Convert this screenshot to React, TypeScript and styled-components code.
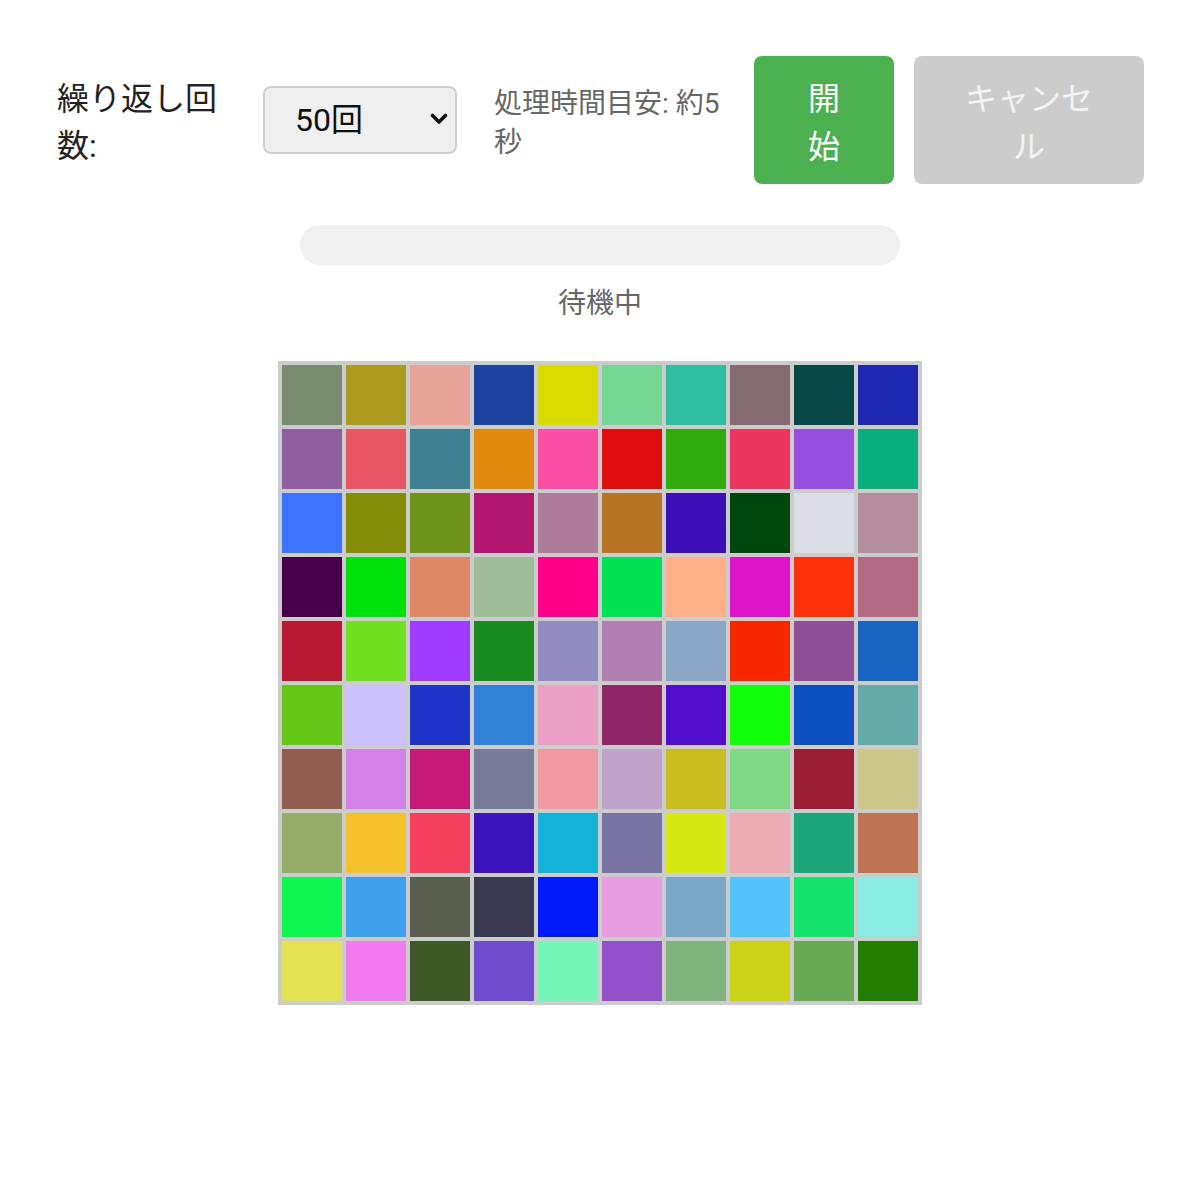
import React, { useState } from "react";
import styled, { createGlobalStyle } from "styled-components";

const GlobalStyle = createGlobalStyle`
  html, body { margin: 0; padding: 0; background: #ffffff; }
  body { font-family: Roboto, "Noto Sans CJK JP", sans-serif; color: #222; }
`;

const Page = styled.div`
  display: flex;
  flex-direction: column;
  align-items: center;
  padding: 56px 0 40px;
`;

const Controls = styled.div`
  align-self: stretch;
  display: flex;
  align-items: center;
  gap: 20px;
  margin: 0 56px 0 57px;
`;

const Label = styled.label`
  flex: none;
  width: 186px;
  padding-top: 6px;
  font-size: 32px;
  line-height: 47px;
  color: #222;
`;

const SelectWrap = styled.div`
  position: relative;
  flex: none;
  width: 194px;
  height: 68px;
`;

const Select = styled.select`
  appearance: none;
  -webkit-appearance: none;
  width: 100%;
  height: 100%;
  box-sizing: border-box;
  border: 2px solid #cfcfcf;
  border-radius: 8px;
  background: #efefef;
  padding: 0 40px 0 30px;
  font-family: Roboto, "Noto Sans CJK JP", sans-serif;
  font-size: 32px;
  color: #111;
`;

const Chevron = styled.svg`
  position: absolute;
  right: 9px;
  top: 27px;
  width: 18px;
  height: 12px;
  pointer-events: none;
`;

const Hint = styled.div`
  flex: none;
  width: 240px;
  margin-left: 17px;
  padding-top: 6px;
  font-size: 28px;
  line-height: 39px;
  color: #666;
`;

const Button = styled.button<{ $variant: "start" | "cancel"; $w: number }>`
  flex: none;
  width: ${(p) => p.$w}px;
  box-sizing: border-box;
  padding: 19px 40px 13px;
  border: none;
  border-radius: 8px;
  font-family: Roboto, "Noto Sans CJK JP", sans-serif;
  font-size: 32px;
  line-height: 48px;
  text-align: center;
  background: ${(p) => (p.$variant === "start" ? "#4caf50" : "#cccccc")};
  color: ${(p) => (p.$variant === "start" ? "#ffffff" : "#f3f3f3")};
  cursor: pointer;
`;

const Track = styled.div`
  margin-top: 41px;
  width: 600px;
  height: 40px;
  border-radius: 20px;
  background: #f0f0f0;
`;

const Status = styled.div`
  margin-top: 17px;
  font-size: 28px;
  line-height: 39px;
  color: #666;
  font-family: "Noto Sans CJK JP", sans-serif;
`;

const Grid = styled.div`
  margin-top: 40px;
  display: grid;
  grid-template-columns: repeat(10, 60px);
  grid-auto-rows: 60px;
  gap: 4px;
  padding: 4px;
  background: #cccccc;
`;

const Cell = styled.div<{ $c: string }>`
  background: ${(p) => p.$c};
`;

const colors: string[] = [
  "#778b6f", "#aa9a1f", "#e8a49a", "#1a44a0", "#d8dc00", "#76d696", "#2ebd9f", "#856a72", "#0a4747", "#1e28b0",
  "#8e5fa0", "#e85565", "#3f8090", "#e0880f", "#fb4fa6", "#e00f0f", "#31aa0e", "#ec3561", "#964ede", "#09ae7c",
  "#3c73ff", "#858e0b", "#6e9519", "#b1176f", "#ae7c9b", "#b77424", "#3b0eb6", "#00470e", "#dadce6", "#b48e9c",
  "#48004d", "#00e00b", "#dd8968", "#9ebd9a", "#ff0089", "#00e253", "#ffb088", "#dd12c9", "#fb310c", "#b26a85",
  "#b81a33", "#72e022", "#9e3bfc", "#1a8b20", "#928bc2", "#b07faf", "#8ca7c6", "#f72800", "#8f4f98", "#1765c0",
  "#66c617", "#cbc2fc", "#1f35c9", "#3181d9", "#eb9fc4", "#8f2768", "#510ecc", "#12ff0a", "#0c4fc0", "#64aba7",
  "#925d50", "#d482e8", "#c41975", "#7a7b99", "#ef9aa2", "#bfa3cb", "#c8be1f", "#7fd984", "#9a1d34", "#cbc78b",
  "#96ac69", "#f4c12a", "#f63e5d", "#3c14bb", "#14b2d8", "#7a74a4", "#d5e811", "#ebabb3", "#1ba579", "#bd7453",
  "#10f651", "#3ea0ec", "#5a5e4d", "#38384f", "#0019fb", "#e89ce0", "#78a8c6", "#53c4fb", "#13e36a", "#8aece2",
  "#e2e253", "#f07bee", "#3d5726", "#6e4bcd", "#73f5b6", "#9152c9", "#80b37d", "#cad318", "#67a955", "#227d00",
];

export default function App() {
  const [count, setCount] = useState("50");
  return (
    <>
      <GlobalStyle />
      <Page>
        <Controls>
          <Label htmlFor="count">繰り返し回数:</Label>
          <SelectWrap>
            <Select id="count" value={count} onChange={(e) => setCount(e.target.value)}>
              <option value="10">10回</option>
              <option value="50">50回</option>
              <option value="100">100回</option>
            </Select>
            <Chevron viewBox="0 0 18 12">
              <path d="M2.5 2.5 L9 9 L15.5 2.5" fill="none" stroke="#111" strokeWidth="3.6" strokeLinecap="round" strokeLinejoin="round" />
            </Chevron>
          </SelectWrap>
          <Hint>処理時間目安: 約5秒</Hint>
          <Button $variant="start" $w={140}>開始</Button>
          <Button $variant="cancel" $w={230} disabled>キャンセル</Button>
        </Controls>
        <Track />
        <Status>待機中</Status>
        <Grid>
          {colors.map((c, i) => (
            <Cell key={i} $c={c} />
          ))}
        </Grid>
      </Page>
    </>
  );
}
